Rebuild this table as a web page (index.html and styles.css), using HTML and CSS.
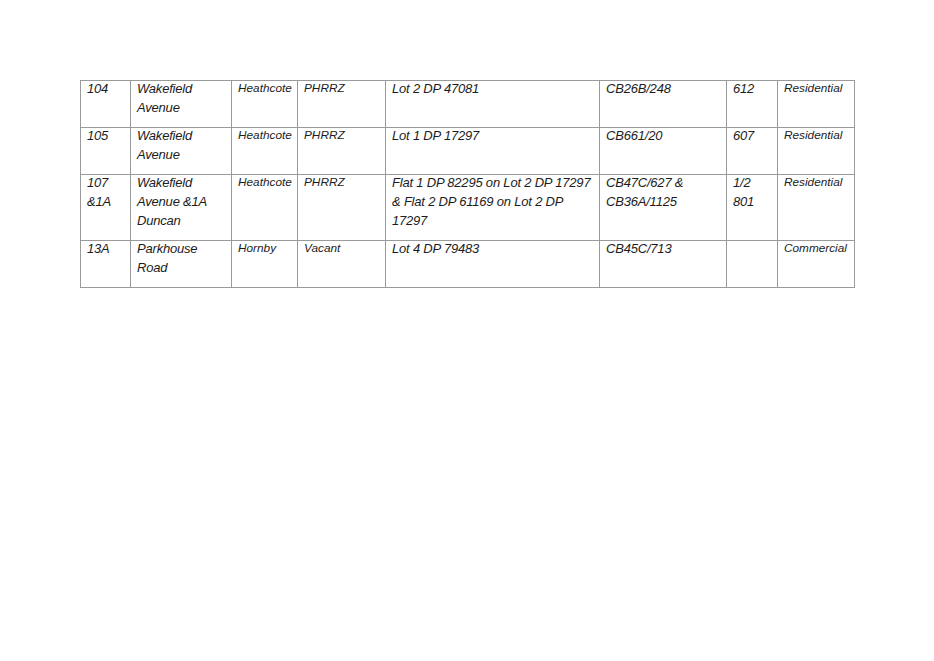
FILE: index.html
```html
<!DOCTYPE html>
<html>
<head>
<meta charset="utf-8">
<link rel="stylesheet" href="styles.css">
</head>
<body>
<div class="page">
<table class="props">
<colgroup>
<col class="c1"><col class="c2"><col class="c3"><col class="c4"><col class="c5"><col class="c6"><col class="c7"><col class="c8">
</colgroup>
<tr>
<td><div class="tx">104</div></td><td><div class="tx">Wakefield Avenue</div></td><td class="sm"><div class="tx">Heathcote</div></td><td class="sm"><div class="tx">PHRRZ</div></td><td><div class="tx">Lot 2 DP 47081</div></td><td><div class="tx">CB26B/248</div></td><td><div class="tx">612</div></td><td class="sm"><div class="tx">Residential</div></td>
</tr>
<tr>
<td><div class="tx">105</div></td><td><div class="tx">Wakefield Avenue</div></td><td class="sm"><div class="tx">Heathcote</div></td><td class="sm"><div class="tx">PHRRZ</div></td><td><div class="tx">Lot 1 DP 17297</div></td><td><div class="tx">CB661/20</div></td><td><div class="tx">607</div></td><td class="sm"><div class="tx">Residential</div></td>
</tr>
<tr>
<td><div class="tx">107 &amp;1A</div></td><td><div class="tx">Wakefield Avenue &amp;1A Duncan</div></td><td class="sm"><div class="tx">Heathcote</div></td><td class="sm"><div class="tx">PHRRZ</div></td><td><div class="tx">Flat 1 DP 82295 on Lot 2 DP 17297 &amp; Flat 2 DP 61169 on Lot 2 DP 17297</div></td><td><div class="tx">CB47C/627 &amp; CB36A/1125</div></td><td><div class="tx">1/2 801</div></td><td class="sm"><div class="tx">Residential</div></td>
</tr>
<tr>
<td><div class="tx">13A</div></td><td><div class="tx">Parkhouse Road</div></td><td class="sm"><div class="tx">Hornby</div></td><td class="sm"><div class="tx">Vacant</div></td><td><div class="tx">Lot 4 DP 79483</div></td><td><div class="tx">CB45C/713</div></td><td><div class="tx"></div></td><td class="sm"><div class="tx">Commercial</div></td>
</tr>
</table>
</div>
</body>
</html>
```
FILE: styles.css
```css
html, body {
  margin: 0;
  padding: 0;
  background: #ffffff;
}
.page {
  padding: 80px 0 0 80px;
}
.props {
  border-collapse: collapse;
  table-layout: fixed;
  width: 774px;
  font-family: "Liberation Sans", Arial, sans-serif;
  font-style: italic;
  font-size: 13px;
  line-height: 19px;
  letter-spacing: -0.2px;
  color: #1c1c1c;
}
.c1 { width: 50px; }
.c2 { width: 101px; }
.c3 { width: 66px; }
.c4 { width: 88px; }
.c5 { width: 214px; }
.c6 { width: 127px; }
.c7 { width: 51px; }
.c8 { width: 77px; }
.props td {
  border: 1px solid #9a9a9a;
  padding: 0 6px 10px 6px;
  vertical-align: top;
}
.props td .tx {
  margin-top: -2px;
  min-height: 19px;
}
.props td.sm {
  font-size: 11.8px;
  letter-spacing: 0;
}
```
